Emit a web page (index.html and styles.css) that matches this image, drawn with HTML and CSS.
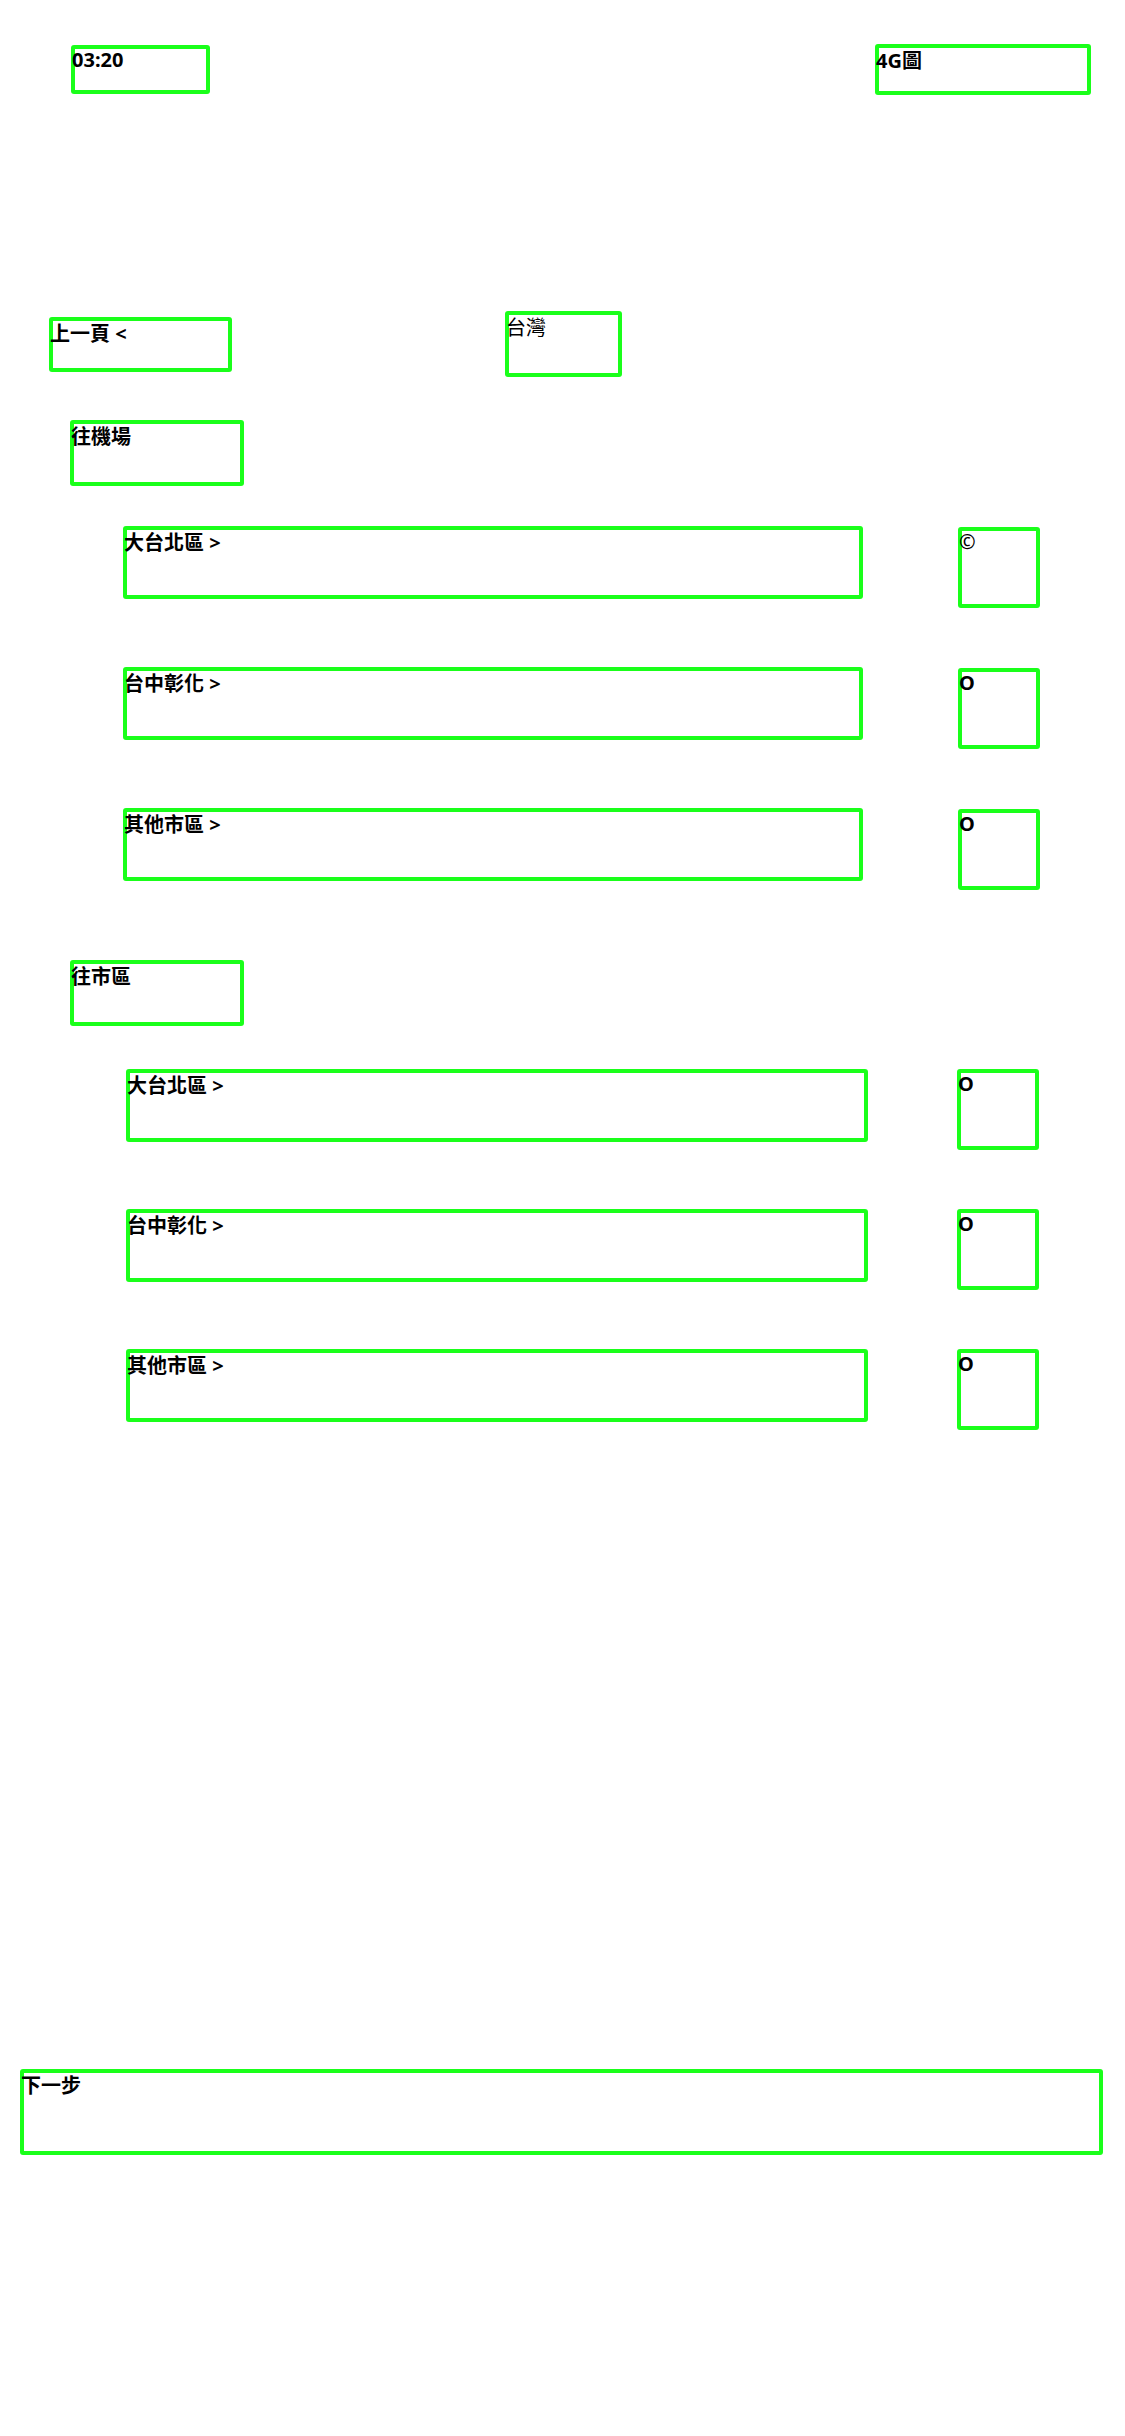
FILE: index.html
```html
<!DOCTYPE html>
<html lang="zh-Hant">
<head>
<meta charset="utf-8">
<title>台灣</title>
<link rel="stylesheet" href="styles.css">
</head>
<body>
<div class="screen">
  <div class="status">
    <div class="box time">03:20</div>
    <div class="box net">4G圖</div>
  </div>

  <div class="nav">
    <div class="box back">上一頁 &lt;</div>
    <div class="box title">台灣</div>
  </div>

  <section class="group group-airport">
    <div class="box heading">往機場</div>
    <ul class="options">
      <li class="option"><div class="box label">大台北區 &gt;</div><div class="box radio radio-on">©</div></li>
      <li class="option"><div class="box label">台中彰化 &gt;</div><div class="box radio">O</div></li>
      <li class="option"><div class="box label">其他市區 &gt;</div><div class="box radio">O</div></li>
    </ul>
  </section>

  <section class="group group-city">
    <div class="box heading">往市區</div>
    <ul class="options">
      <li class="option"><div class="box label">大台北區 &gt;</div><div class="box radio">O</div></li>
      <li class="option"><div class="box label">台中彰化 &gt;</div><div class="box radio">O</div></li>
      <li class="option"><div class="box label">其他市區 &gt;</div><div class="box radio">O</div></li>
    </ul>
  </section>

  <div class="box next">下一步</div>
</div>
</body>
</html>
```

FILE: styles.css
```css
html, body {
  margin: 0;
  padding: 0;
  background: #ffffff;
}

.screen {
  width: 1125px;
  min-height: 2436px;
  font-family: "Noto Sans", "Noto Sans CJK TC", sans-serif;
  font-size: 20px;
  font-weight: 700;
  color: #000;
  line-height: normal;
}

.box {
  box-sizing: border-box;
  box-shadow: inset 0 0 0 4px #1aff1a;
  border-radius: 3px;
  padding: 1px 0 0 1px;
  flex: none;
}

/* status bar */
.status {
  display: flex;
  justify-content: space-between;
  align-items: flex-start;
  padding: 44px 34px 0 71px;
}
.time {
  width: 139px;
  height: 49px;
  margin-top: 1px;
}
.net {
  width: 216px;
  height: 51px;
}

/* navigation */
.nav {
  display: flex;
  align-items: flex-start;
  margin-top: 216px;
  padding-left: 49px;
}
.back {
  width: 183px;
  height: 55px;
  margin-top: 6px;
}
.title {
  width: 117px;
  height: 66px;
  margin-left: 273px;
  font-weight: 400;
}

/* groups */
.heading {
  width: 174px;
  height: 66px;
  margin-left: 70px;
}
.group-airport {
  margin-top: 43px;
}
.group-city {
  margin-top: 70px;
}

.options {
  list-style: none;
  margin: 40px 0 0;
  padding: 0;
  display: flex;
  flex-direction: column;
  gap: 59px;
}
.group-city .options {
  margin-top: 43px;
}

.option {
  display: flex;
  align-items: flex-start;
  padding-left: 123px;
}
.group-city .option {
  padding-left: 126px;
}

.label {
  width: 740px;
  height: 73px;
}
.group-city .label {
  width: 742px;
}

.radio {
  width: 82px;
  height: 81px;
  margin-left: 95px;
  margin-top: 1px;
}
.group-city .radio {
  margin-left: 89px;
  margin-top: 0;
}
.radio-on {
  font-weight: 400;
}

/* bottom button */
.next {
  width: 1083px;
  height: 86px;
  margin: 639px 0 0 20px;
}
```
